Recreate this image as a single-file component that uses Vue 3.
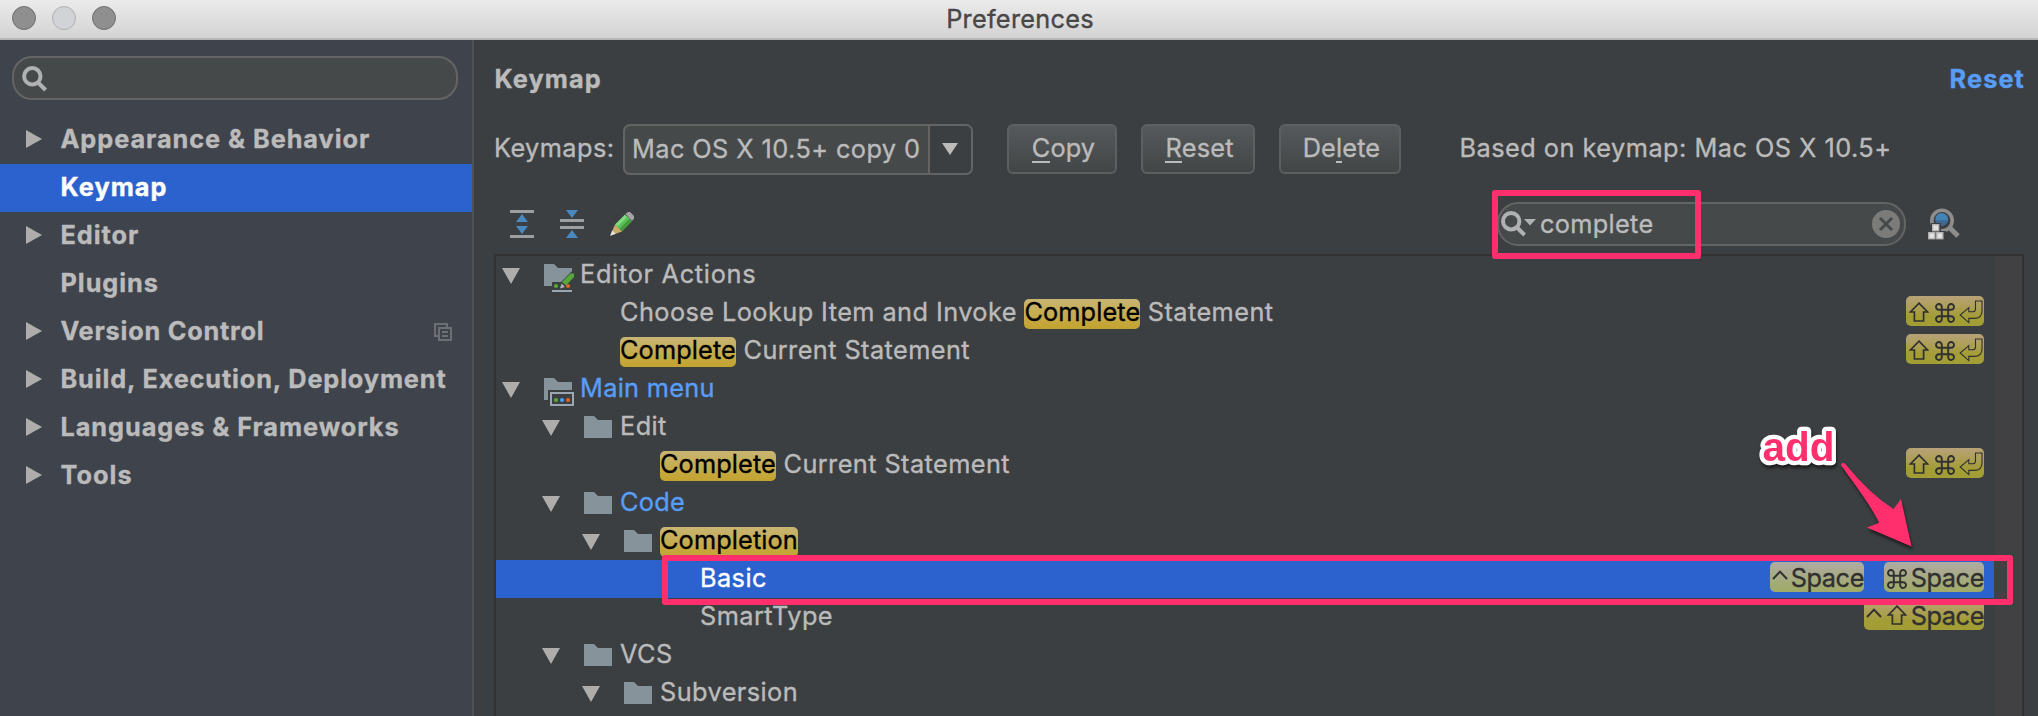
<script setup>
const sections = [
  { label: 'Appearance & Behavior', arrow: true, track: 0.95 },
  { label: 'Keymap', selected: true, track: 1.05 },
  { label: 'Editor', arrow: true, track: 0.95 },
  { label: 'Plugins', track: 0.95 },
  { label: 'Version Control', arrow: true, project: true, track: 0.78 },
  { label: 'Build, Execution, Deployment', arrow: true, track: 0.87 },
  { label: 'Languages & Frameworks', arrow: true, track: 0.94 },
  { label: 'Tools', arrow: true, track: 1.05 }
]

const enter = ['shift', 'cmd', 'enter']

const rows = [
  { level: 0, icon: 'editor', parts: [{ t: 'Editor Actions' }], wide: true },
  { level: 1, parts: [{ t: 'Choose Lookup Item and Invoke ' }, { t: 'Complete', hit: true }, { t: ' Statement' }], keys: [enter] },
  { level: 1, parts: [{ t: 'Complete', hit: true }, { t: ' Current Statement' }], keys: [enter] },
  { level: 0, icon: 'menu', parts: [{ t: 'Main menu' }], changed: true },
  { level: 1, icon: 'folder', parts: [{ t: 'Edit' }] },
  { level: 2, parts: [{ t: 'Complete', hit: true }, { t: ' Current Statement' }], keys: [enter] },
  { level: 1, icon: 'folder', parts: [{ t: 'Code' }], changed: true },
  { level: 2, icon: 'folder', parts: [{ t: 'Completion', hit: true }] },
  { level: 3, parts: [{ t: 'Basic' }], selected: true, keys: [['ctrl', 'Space'], ['cmd', 'Space']] },
  { level: 3, parts: [{ t: 'SmartType' }], keys: [['ctrl', 'shift', 'Space']] },
  { level: 1, icon: 'folder', parts: [{ t: 'VCS' }] },
  { level: 2, icon: 'folder', parts: [{ t: 'Subversion' }] }
]
</script>

<template>
  <div class="window">
    <header class="titlebar">
      <div class="lights"><i class="light"></i><i class="light pale"></i><i class="light"></i></div>
      <span class="title">Preferences</span>
    </header>

    <div class="body">
      <aside class="sidebar">
        <div class="side-search">
          <svg width="26" height="26" viewBox="0 0 26 26" fill="none" stroke="#afb1b3" stroke-width="4">
            <circle cx="10.3" cy="10.3" r="8.2" /><path d="M16 16.5L23.6 24" />
          </svg>
        </div>
        <nav>
          <div v-for="s in sections" :key="s.label" class="section" :class="{ selected: s.selected }">
            <span class="slot">
              <svg v-if="s.arrow" width="16" height="18" viewBox="0 0 16 18"><path d="M0 0L16 9L0 18Z" fill="#afadab" /></svg>
            </span>
            <span class="section-label" :style="{ letterSpacing: s.track + 'px' }">{{ s.label }}</span>
            <svg v-if="s.project" class="project" width="18" height="18" viewBox="0 0 18 18" fill="none" stroke="#6c7074" stroke-width="2">
              <path d="M4 13H1V1H13V4" /><rect x="5" y="5" width="12" height="12" /><path d="M8 9H14M8 13H14" />
            </svg>
          </div>
        </nav>
      </aside>

      <main class="content">
        <div class="head"><span>Keymap</span><span class="reset-link">Reset</span></div>

        <div class="controls">
          <span class="label">Keymaps:</span>
          <div class="combo">
            <span class="combo-text">Mac OS X 10.5+ copy 0</span>
            <span class="combo-arrow"><svg width="16" height="12" viewBox="0 0 16 12"><path d="M0 0H16L8 12Z" fill="#bbbbbb" /></svg></span>
          </div>
          <button class="btn copy"><u>C</u>opy</button>
          <button class="btn reset"><u>R</u>eset</button>
          <button class="btn delete">De<u>l</u>ete</button>
          <span class="based">Based on keymap: Mac OS X 10.5+</span>
        </div>

        <div class="toolbar">
          <svg width="24" height="28" viewBox="0 0 24 28">
            <path d="M0 0H24V3H0ZM0 25H24V28H0Z" fill="#9a9fa2" /><path d="M12 4L18 12H6ZM6 16H18L12 24Z" fill="#4a88c2" />
          </svg>
          <svg class="collapse" width="24" height="28" viewBox="0 0 24 28">
            <path d="M0 9H24V12H0ZM0 16H24V19H0Z" fill="#9a9fa2" /><path d="M6 0H18L12 8ZM12 20L18 28H6Z" fill="#4a88c2" />
          </svg>
          <svg class="pencil" width="24" height="24" viewBox="0 0 24 24">
            <path d="M5 12.5L15 2.5L18 5.5L8 15.5Z" fill="#7fdc7c" />
            <path d="M7 15L17.5 4.5L20 7L9.5 17.5Z" fill="#5cc05a" />
            <path d="M9.5 17L19.5 7L22 9.5L12 19.5Z" fill="#459c3a" />
            <path d="M15.5 2L18 0H20L24 4V6.5L22 9Z" fill="#a5a3a6" />
            <path d="M5 12.5L12 19.5L3.5 22.5L1.5 20.5Z" fill="#c9ab6c" />
            <path d="M2.2 18.5L5.8 21.7L0 24Z" fill="#e3e3e3" />
          </svg>
          <div class="search">
            <svg class="glass" width="35" height="26" viewBox="0 0 35 26" fill="none">
              <circle cx="10.2" cy="10.2" r="8.2" stroke="#afb1b3" stroke-width="4" /><path d="M16 16.5L23.6 24" stroke="#afb1b3" stroke-width="4" />
              <path d="M23 8H35L29 14.5Z" fill="#afb1b3" />
            </svg>
            <span class="query">complete</span>
            <svg class="clear" width="28" height="28" viewBox="0 0 28 28">
              <circle cx="14" cy="14" r="14" fill="#7b7c7a" /><path d="M8 8L20 20M20 8L8 20" stroke="#45494a" stroke-width="3" />
            </svg>
          </div>
          <svg class="find-key" width="32" height="32" viewBox="0 0 32 32">
            <path d="M22 20L30 28" stroke="#8d8d8d" stroke-width="5" />
            <circle cx="14" cy="12.5" r="10.2" fill="#3c3f41" stroke="#8d8d8d" stroke-width="3.6" />
            <circle cx="13.7" cy="11.3" r="6.3" fill="#4583b5" /><path d="M7.5 12.3H20A6.3 6.3 0 0 1 7.5 12.3Z" fill="#3c6a94" />
            <path d="M3 15H13V23H18V32H0V23H3Z" fill="#3c3f41" />
            <g fill="#e2e2e2" stroke="#b5b5b5" stroke-width="1.4"><rect x="4.7" y="16.7" width="6" height="6" /><rect x=".8" y="24.7" width="6" height="6" /><rect x="8.8" y="24.7" width="6" height="6" /></g>
          </svg>
        </div>

        <div class="tree">
          <div class="rows">
            <div v-for="(r, i) in rows" :key="i" class="row" :class="{ selected: r.selected, changed: r.changed, wide: r.wide }">
              <span :style="{ width: 6 + r.level * 40 + 'px' }"></span>
              <span v-if="r.icon" class="twist"><svg width="18" height="16" viewBox="0 0 18 16"><path d="M0 0H18L9 16Z" fill="#afadab" /></svg></span>
              <span v-if="r.icon" class="icon">
                <svg v-if="r.icon === 'folder'" width="30" height="28" viewBox="0 0 30 28"><path d="M0 0H10L14 4H28V22H0Z" fill="#87939a" /></svg>
                <svg v-else-if="r.icon === 'menu'" width="30" height="28" viewBox="0 0 30 28">
                  <path d="M0 0H10L14 4H28V12H4V22H0Z" fill="#87939a" />
                  <rect x="7" y="15" width="22" height="12" fill="none" stroke="#9aa7b0" stroke-width="2" />
                  <circle cx="12" cy="22" r="2.1" fill="#5aa63a" /><circle cx="18" cy="22" r="2.1" fill="#4f9cf0" /><circle cx="24" cy="22" r="2.1" fill="#e0651f" />
                </svg>
                <svg v-else width="30" height="28" viewBox="0 0 30 28">
                  <path d="M0 0H10L14 4H28V7L17 18H8V22H0Z" fill="#87939a" />
                  <path d="M8 26H28V28H8Z" fill="#9aa7b0" />
                  <circle cx="12" cy="22" r="2.1" fill="#5aa63a" /><circle cx="24" cy="22" r="2.1" fill="#e0651f" />
                  <path d="M18 18L26.5 9.5H30V13L22 21.5Z" fill="#57a83a" /><path d="M17.5 19.5L21 23L16 24.5Z" fill="#b4b4b4" />
                </svg>
              </span>
              <span v-if="!r.icon" class="leaf"></span>
              <span class="name"><span v-for="(p, j) in r.parts" :key="j" :class="{ hit: p.hit }">{{ p.t }}</span></span>
              <span class="keys">
                <span v-for="(k, j) in r.keys" :key="j" class="pill" :class="k.join('-')">
                  <template v-for="c in k" :key="c">
                    <svg v-if="c === 'shift'" class="g-shift" width="20" height="20" viewBox="0 0 20 20" fill="none" stroke="#303030" stroke-width="1.7"><path d="M10 1.2L18.6 10H14.6V19H5.4V10H1.4Z" /></svg>
                    <svg v-else-if="c === 'cmd'" class="g-cmd" width="20" height="20" viewBox="0 0 20 20" fill="none" stroke="#303030" stroke-width="1.9"><path d="M6.8 6.8H13.2V13.2H6.8ZM6.8 6.8H4A2.9 2.9 0 1 1 6.8 4ZM13.2 6.8V4A2.9 2.9 0 1 1 16 6.8ZM13.2 13.2H16A2.9 2.9 0 1 1 13.2 16ZM6.8 13.2V16A2.9 2.9 0 1 1 4 13.2Z" /></svg>
                    <svg v-else-if="c === 'enter'" class="g-enter" width="24" height="24" viewBox="0 0 24 24" fill="none" stroke="#303030" stroke-width="1.1"><path d="M16.5 1H23V11Q23 18.4 15 18.4H9.8V22.6L1.2 15L9.8 7.6V11.8H13.5Q16.5 11.8 16.5 9Z" /></svg>
                    <svg v-else-if="c === 'ctrl'" class="g-ctrl" width="16" height="10" viewBox="0 0 16 10" fill="none" stroke="#303030" stroke-width="2"><path d="M1 9L8 1.6L15 9" /></svg>
                    <span v-else class="key-text">{{ c }}</span>
                  </template>
                </span>
              </span>
            </div>
          </div>
          <div class="scroll"></div>
        </div>
      </main>
    </div>

    <div class="box box-search"></div>
    <div class="box box-row"></div>
    <svg class="note" width="220" height="150" viewBox="0 0 220 150">
      <g class="shade">
        <text x="12.5" y="40.7" class="add">add</text>
        <path d="M91.5 43.5Q94.5 42 97 46Q120 74 143.5 89L151 79L161.5 126.5L117 107.5L129 103Q124 90 91.5 46Q90.5 44.5 91.5 43.5Z" fill="#ff2f6e" />
      </g>
    </svg>
  </div>
</template>

<style>
html, body { margin: 0; overflow: hidden; background: #3c3f41; }
</style>

<style scoped>
.window { position: relative; width: 2038px; height: 716px; overflow: hidden; display: flex; flex-direction: column; background: #3c3f41; color: #bbbbbb; font: 400 25.3px/38px Inter, "Liberation Sans", sans-serif; letter-spacing: .43px; white-space: pre; -webkit-text-stroke: .35px currentColor; }
.titlebar { position: relative; box-sizing: border-box; flex: none; height: 40px; display: flex; justify-content: center; background: linear-gradient(#ebebeb, #d3d3d3); border-bottom: 2px solid #b7b7b7; color: #474747; letter-spacing: .26px; }
.title { line-height: 37px; padding-left: 2px; }
.lights { position: absolute; left: 12px; top: 6px; display: flex; gap: 16px; }
.light { box-sizing: border-box; width: 24px; height: 24px; border-radius: 50%; background: #8f8f90; border: 1px solid #6f6f70; }
.light.pale { background: #d2d3d6; border-color: #b0b0b1; }
.body { flex: 1; display: flex; min-height: 0; }
.sidebar { flex: none; box-sizing: border-box; width: 474px; background: #3f434b; border-right: 2px solid #4f5254; padding-top: 16px; font-weight: 700; }
.side-search { box-sizing: border-box; width: 446px; height: 44px; margin: 0 0 16px 12px; padding: 8px 0 0 8px; border: 2px solid #646464; border-radius: 20px; background: #45494a; }
.side-search svg { display: block; }
.section { height: 48px; display: flex; align-items: center; color: #bbbbbb; }
.section.selected { background: #2c62ce; color: #fff; }
.slot { width: 34.5px; padding-left: 26px; display: flex; margin-top: -2px; }
.section-label { padding-bottom: 2px; flex: 1; }
.project { margin: -1px 20px 0 0; }
.content { flex: 1; min-width: 0; display: flex; flex-direction: column; }
.head { flex: none; height: 38px; margin-top: 20px; padding: 0 13px 0 20.5px; display: flex; justify-content: space-between; font-weight: 700; letter-spacing: 1.1px; }
.reset-link { color: #589df6; }
.controls { flex: none; display: flex; align-items: center; height: 52px; margin-top: 25px; padding-left: 20px; }
.label { width: 129px; padding-bottom: 2px; }
.combo { box-sizing: border-box; width: 350px; height: 51px; display: flex; border: 2px solid #646464; border-radius: 7px; overflow: hidden; background: #45494a; }
.combo-text { box-sizing: border-box; width: 303px; padding-left: 7px; line-height: 46px; }
.combo-arrow { flex: 1; display: flex; align-items: center; justify-content: center; padding-right: 2px; border-left: 2px solid #646464; background: #3c3f41; }
.btn { box-sizing: border-box; height: 50px; padding: 0 0 2px 3px; border: 2px solid #5c6061; border-radius: 6px; background: linear-gradient(#55595b, #424647); color: #bbbbbb; font: inherit; letter-spacing: .15px; }
.btn u { display: inline-block; text-decoration: none; line-height: 24px; height: 27px; margin-bottom: -3px; box-shadow: inset 0 -2px #bbbbbb; }
.copy { width: 110px; margin-left: 34px; }
.reset { width: 114px; margin-left: 24px; }
.delete { width: 122px; margin-left: 24px; }
.based { margin-left: 58.5px; letter-spacing: .48px; padding-bottom: 2px; }
.toolbar { flex: none; height: 44px; margin-top: 27px; padding-left: 36px; display: flex; align-items: center; }
.collapse { margin-left: 26px; }
.pencil { margin-left: 26px; }
.search { box-sizing: border-box; width: 409px; height: 44px; margin-left: 863px; border: 2px solid #646464; border-radius: 21px; background: #45494a; display: flex; align-items: center; padding: 0 4px 0 2px; }
.query { margin-left: 4px; flex: 1; letter-spacing: .33px; }
.find-key { margin-left: 22px; }
.tree { box-sizing: border-box; flex: none; width: 1530px; height: 480px; margin: 8px 0 0 20px; display: flex; border: 2px solid #323232; border-bottom: 0; overflow: hidden; }
.rows { flex: 1; min-width: 0; }
.scroll { width: 28px; background: #414043; }
.row { height: 38px; display: flex; align-items: center; }
.row.selected { background: #2c62ce; color: #fff; }
.row.changed { color: #589df6; }
.row.changed .name { letter-spacing: .3px; }
.row.wide { letter-spacing: .7px; }
.twist { width: 42px; display: flex; margin-top: 1px; }
.icon { width: 36px; display: flex; margin-top: 6px; }
.leaf { width: 38px; }
.leaf + .name { margin-left: 40px; }
.name { flex: 1; padding-bottom: 2px; }
.hit { display: inline-block; height: 30px; line-height: 26px; border-radius: 5px; background: linear-gradient(#c8b573, #c4a32e); color: #000; letter-spacing: .12px; }
.keys { display: flex; gap: 20px; margin-right: 10px; margin-top: -4px; }
.pill { box-sizing: border-box; height: 30px; display: flex; align-items: center; border-radius: 5px; background: linear-gradient(#b8a279, #a39d35 70%); color: #303030; letter-spacing: -.4px; }
.selected .pill { background: linear-gradient(#b0aaa2, #9fab65); }
.shift-cmd-enter { width: 78px; }
.g-shift { margin: 2px 0 0 3px; }
.g-cmd { margin: 3px 0 0 6px; }
.g-enter { margin: 2px 0 0 4px; }
.g-ctrl { margin: -5px 0 0 2px; }
.cmd-Space .g-cmd { margin-left: 3px; }
.ctrl-shift-Space .g-shift { margin: -1px 0 0 5px; }
.key-text { margin-left: auto; line-height: 30px; padding-top: 1px; }
.ctrl-Space { width: 94px; }
.cmd-Space { width: 100px; }
.ctrl-shift-Space { width: 120px; }
.box { position: absolute; box-sizing: border-box; border: 6px solid #ff2f6e; border-radius: 3px; }
.box-search { left: 1492px; top: 190px; width: 209px; height: 69px; }
.box-row { left: 662px; top: 555px; width: 1350.5px; height: 50px; }
.note { position: absolute; left: 1750px; top: 420px; }
.shade { filter: drop-shadow(1px 3px 1.5px rgba(0, 0, 0, .55)); }
.add { font: 700 40.5px "Liberation Sans", Arial, sans-serif; letter-spacing: 0; fill: #ff2f6e; stroke: #fff; stroke-width: 8.5px; stroke-linejoin: round; paint-order: stroke; }
</style>
